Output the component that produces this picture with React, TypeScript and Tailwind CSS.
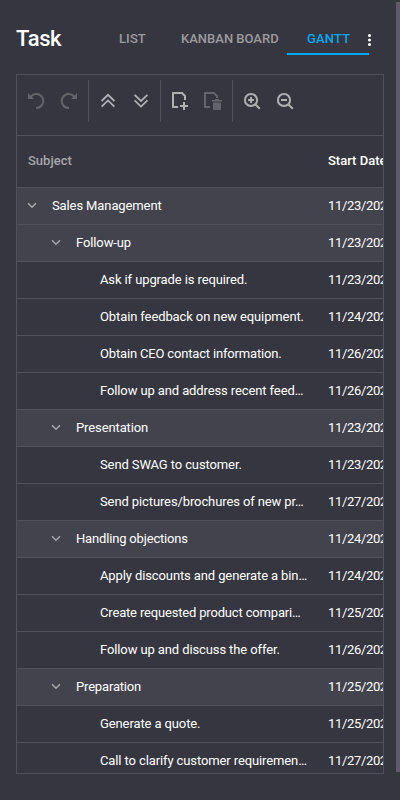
import type { ReactNode } from "react";

type Row = { level: 0 | 1 | 2; text: string; date: string; tight?: boolean };

const rows: Row[] = [
  { level: 0, text: "Sales Management", date: "11/23/2024" },
  { level: 1, text: "Follow-up", date: "11/23/2024" },
  { level: 2, text: "Ask if upgrade is required.", date: "11/23/2024" },
  { level: 2, text: "Obtain feedback on new equipment.", date: "11/24/2024" },
  { level: 2, text: "Obtain CEO contact information.", date: "11/26/2024", tight: true },
  { level: 2, text: "Follow up and address recent feed…", date: "11/26/2024" },
  { level: 1, text: "Presentation", date: "11/23/2024" },
  { level: 2, text: "Send SWAG to customer.", date: "11/23/2024" },
  { level: 2, text: "Send pictures/brochures of new pr…", date: "11/27/2024" },
  { level: 1, text: "Handling objections", date: "11/24/2024", tight: true },
  { level: 2, text: "Apply discounts and generate a bin…", date: "11/24/2024" },
  { level: 2, text: "Create requested product compari…", date: "11/25/2024", tight: true },
  { level: 2, text: "Follow up and discuss the offer.", date: "11/26/2024" },
  { level: 1, text: "Preparation", date: "11/25/2024", tight: true },
  { level: 2, text: "Generate a quote.", date: "11/25/2024" },
  { level: 2, text: "Call to clarify customer requiremen…", date: "11/27/2024" },
];

const indent = ["pl-[6px]", "pl-[30px]", "pl-[83px]"];

function Icon({ children, dim = false }: { children: ReactNode; dim?: boolean }) {
  return (
    <svg
      viewBox="0 0 18 18"
      className={`h-[18px] w-[18px] shrink-0 ${dim ? "text-[#64646c]" : "text-[#b0b0b4]"}`}
      fill="none"
      stroke="currentColor"
      strokeWidth="2"
    >
      {children}
    </svg>
  );
}

function Separator() {
  return <div className="h-[42px] w-px shrink-0 bg-[#515159]" />;
}

function Toolbar() {
  return (
    <div className="flex h-[61px] shrink-0 items-start border-b border-[#515159] pt-[5px]">
      <div className="flex h-[42px] w-[71px] shrink-0 items-center gap-[15px] pl-[10px]">
        <Icon dim>
          <path d="M3.8 4.6A7 7 0 1 1 9 16" />
          <path d="M1 1v6h6z" fill="currentColor" stroke="none" />
        </Icon>
        <Icon dim>
          <path d="M14.2 4.6A7 7 0 1 0 9 16" />
          <path d="M17 1v6h-6z" fill="currentColor" stroke="none" />
        </Icon>
      </div>
      <Separator />
      <div className="flex h-[42px] w-[71px] shrink-0 items-center gap-[15px] pl-[10px]">
        <Icon>
          <path d="M2.6 9 9 2.8 15.4 9M2.6 14.6 9 8.4l6.4 6.2" strokeWidth="1.8" />
        </Icon>
        <Icon>
          <path d="M2.6 2.8 9 9l6.4-6.2M2.6 8.4 9 14.6l6.4-6.2" strokeWidth="1.8" />
        </Icon>
      </div>
      <Separator />
      <div className="flex h-[42px] w-[71px] shrink-0 items-center gap-[15px] pl-[10px]">
        <Icon>
          <path d="M7 15H2V1h9l3 3v4" />
          <path d="M13 10v8M9 14h8" />
        </Icon>
        <Icon dim>
          <path d="M6 15H1V1h9l3 3v2" />
          <path
            d="M8 8h3V7h4v1h3v1.4H8zM9 10.4h8V17a1 1 0 0 1-1 1h-6a1 1 0 0 1-1-1z"
            fill="currentColor"
            stroke="none"
          />
        </Icon>
      </div>
      <Separator />
      <div className="flex h-[42px] shrink-0 items-center gap-[15px] pl-[10px]">
        <Icon>
          <circle cx="8" cy="8" r="6.1" />
          <path d="m12.2 12.2 4.6 4.6M8 5v6M5 8h6" />
        </Icon>
        <Icon>
          <circle cx="8" cy="8" r="6.1" />
          <path d="m12.2 12.2 4.6 4.6M5 8h6" />
        </Icon>
      </div>
    </div>
  );
}

function TaskRow({ level, text, date, tight }: Row) {
  return (
    <div
      className={`flex h-[37px] shrink-0 items-center border-b border-[#515159] ${level < 2 ? "bg-[#43434e]" : ""}`}
    >
      <div className={`flex w-[300px] shrink-0 items-center ${indent[level]}`}>
        {level < 2 && (
          <svg viewBox="0 0 18 18" className="mr-[11px] h-[18px] w-[18px] shrink-0 stroke-[#a5a5aa]" fill="none" strokeWidth="1.6">
            <path d="m5 6.2 4 4 4-4" />
          </svg>
        )}
        <span className={`whitespace-nowrap ${tight ? "tracking-[-0.17px]" : "tracking-[-0.11px]"}`}>{text}</span>
      </div>
      <span className="ml-[11px] shrink-0 tracking-[-0.34px]">{date}</span>
    </div>
  );
}

export default function App() {
  return (
    <div className="flex h-[800px] w-[400px] overflow-hidden bg-[#363640] font-['Roboto','Liberation_Sans',sans-serif] text-[13px] leading-[18px] text-white">
      <div className="flex w-[396px] shrink-0 flex-col pr-3 pl-4">
        <header className="flex h-[74px] shrink-0 items-start pt-[22px]">
          <h1 className="w-[85px] shrink-0 pt-[3px] text-[22px] leading-[28px] font-medium tracking-[-0.35px]">Task</h1>
          <nav className="flex h-[33px] shrink-0 text-[13px] font-medium text-[#9b9b9f]">
            <span className="w-[62px] pt-[8px] pl-[18px] tracking-[0.1px]">LIST</span>
            <span className="w-[124px] pt-[8px] pl-[18px] whitespace-nowrap">KANBAN BOARD</span>
            <span className="w-[82px] border-b-2 border-[#03a9f4] pt-[8px] pl-[20px] tracking-[0.15px] text-[#03a9f4]">GANTT</span>
          </nav>
          <svg viewBox="0 0 4 14" className="-ml-[2px] mt-[11px] h-[14px] w-1 shrink-0 fill-white">
            <circle cx="2.5" cy="2.5" r="1.5" />
            <circle cx="2.5" cy="7" r="1.5" />
            <circle cx="2.5" cy="11.5" r="1.5" />
          </svg>
        </header>
        <main className="flex h-[700px] w-[368px] shrink-0 flex-col overflow-hidden border border-[#515159]">
          <Toolbar />
          <div className="flex h-[52px] shrink-0 items-center border-b border-[#515159] pb-[2px] font-medium">
            <span className="w-[311px] shrink-0 pl-[11px] text-[#a5a5aa]">Subject</span>
            <span className="shrink-0 whitespace-nowrap">Start Date</span>
          </div>
          {rows.map((row) => (
            <TaskRow key={row.text} {...row} />
          ))}
        </main>
      </div>
      <div className="mt-[2px] h-[770px] w-1 shrink-0 bg-[#5f5b6b]" />
    </div>
  );
}
